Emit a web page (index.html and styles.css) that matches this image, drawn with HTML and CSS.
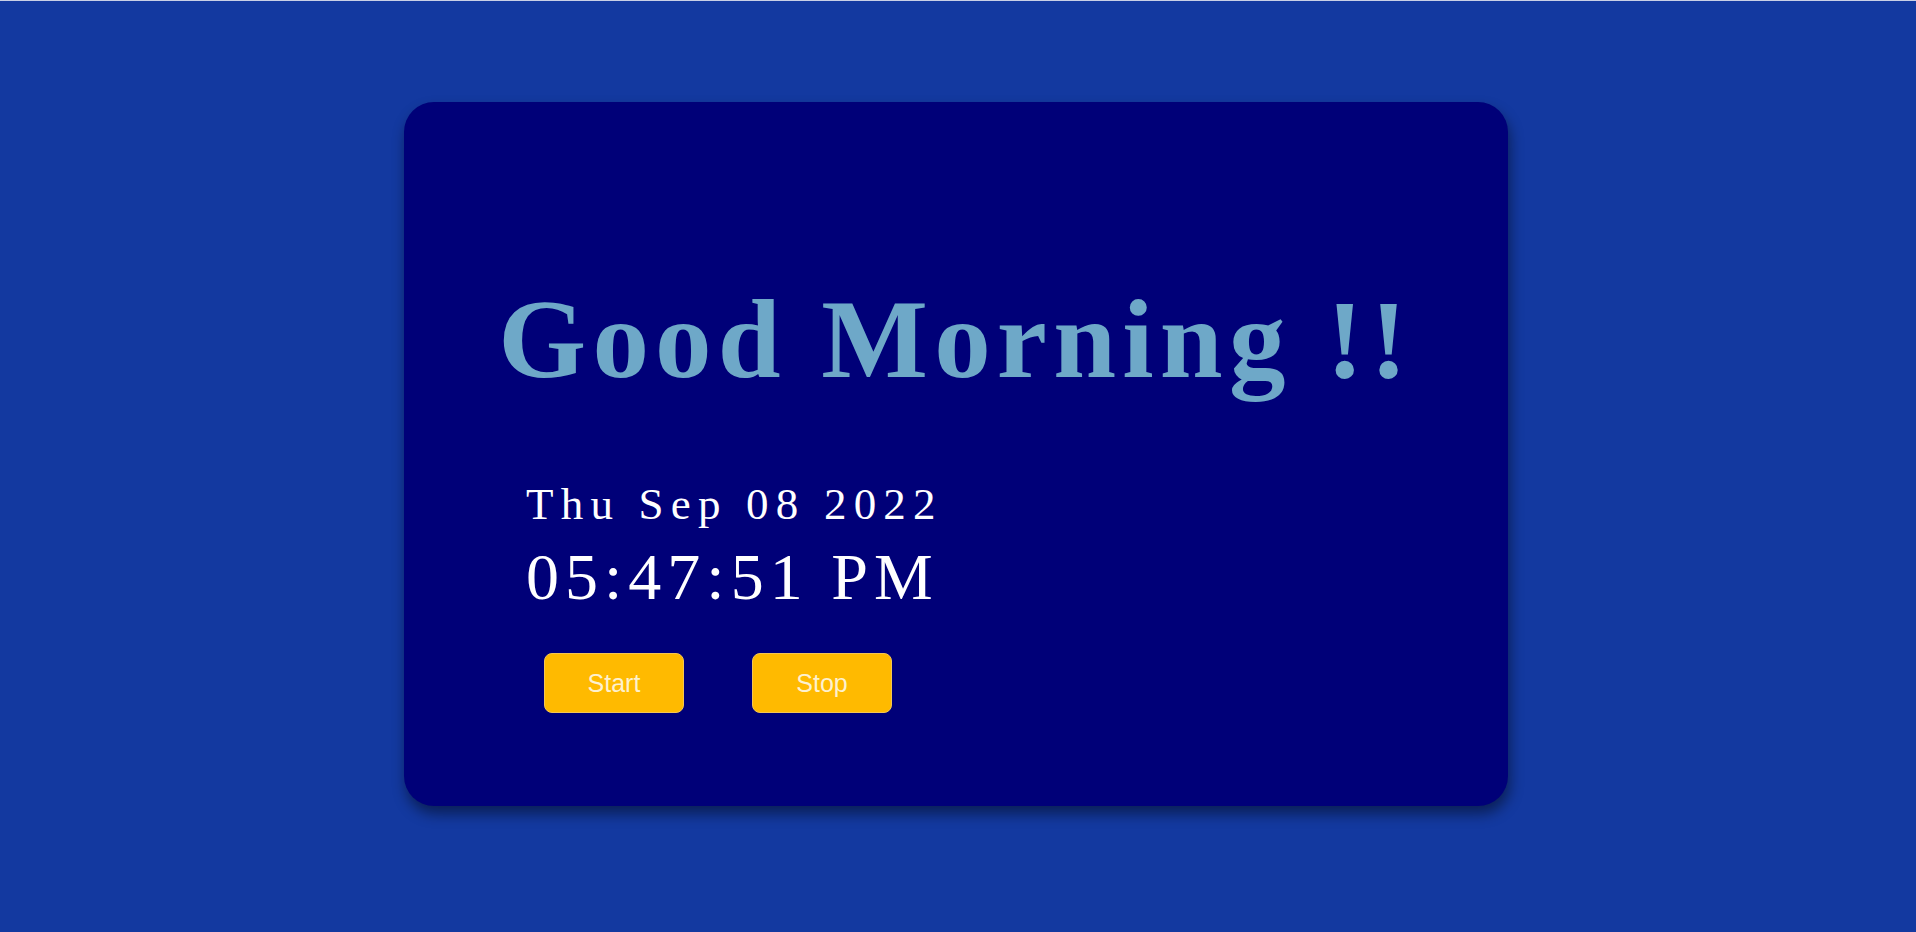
FILE: index.html
```html
<!DOCTYPE html>
<html lang="en">
<head>
<meta charset="utf-8">
<title>Greeting Clock</title>
<link rel="stylesheet" href="styles.css">
</head>
<body>
<div class="topline"></div>
<main class="page">
  <section class="card">
    <h1 class="greeting">Good Morning !!</h1>
    <div class="clock">
      <div class="date">Thu Sep 08 2022</div>
      <div class="time">05:47:51 PM</div>
    </div>
    <div class="actions">
      <button class="btn" type="button">Start</button>
      <button class="btn" type="button">Stop</button>
    </div>
  </section>
</main>
</body>
</html>
```

FILE: styles.css
```css
html, body {
  margin: 0;
  padding: 0;
}

body {
  background: #1339a0;
  height: 932px;
  overflow: hidden;
  font-family: "Liberation Serif", "Times New Roman", serif;
}

.topline {
  height: 1px;
  background: #c9d0e6;
}

.page {
  display: flex;
  justify-content: flex-start;
  padding-top: 101px;
  padding-left: 404px;
}

.card {
  box-sizing: border-box;
  width: 1104px;
  height: 704px;
  background: #000078;
  border-radius: 30px;
  box-shadow: 2px 8px 14px rgba(0, 0, 0, 0.45);
  padding: 169px 0 0 122px;
}

.greeting {
  margin: 0 0 0 -122px;
  text-align: center;
  font-family: "Liberation Serif", "Times New Roman", serif;
  font-weight: bold;
  font-size: 113px;
  line-height: 136px;
  letter-spacing: 6.2px;
  color: #6ea8c8;
}

.clock {
  margin-top: 71px;
  color: #ffffff;
}

.date {
  font-size: 45px;
  line-height: 52px;
  letter-spacing: 7.2px;
}

.time {
  margin-top: 9px;
  font-size: 66px;
  line-height: 76px;
  letter-spacing: 6px;
}

.actions {
  display: flex;
  gap: 68px;
  margin-top: 38px;
  margin-left: 18px;
}

.btn {
  box-sizing: border-box;
  width: 140px;
  height: 60px;
  background: #ffba00;
  border: 1px solid #f4c553;
  border-radius: 8px;
  color: #fdf1cf;
  font-family: "Liberation Sans", Arial, sans-serif;
  font-size: 25px;
  padding: 0;
  cursor: pointer;
}
```
